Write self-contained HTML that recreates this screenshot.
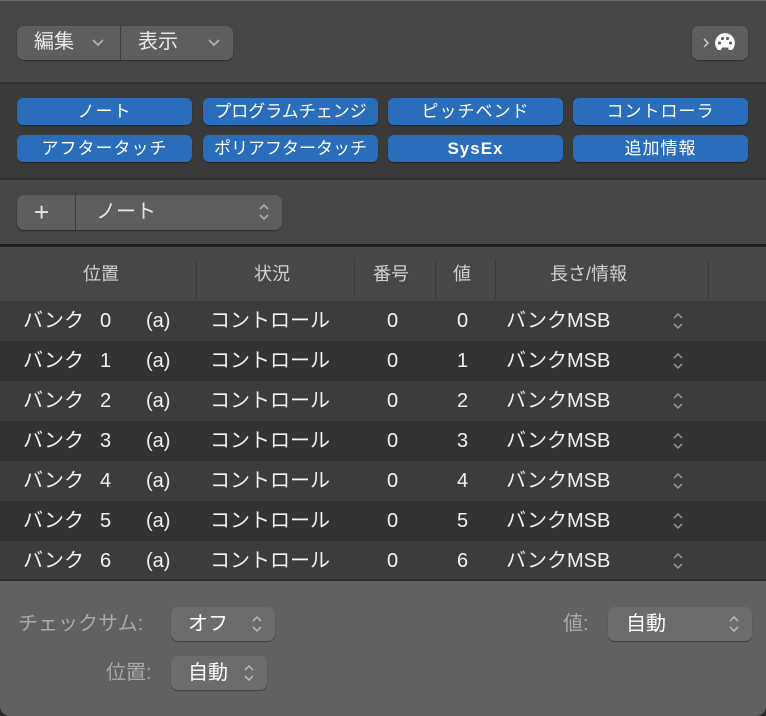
<!DOCTYPE html>
<html><head><meta charset="utf-8"><style>
*{margin:0;padding:0;box-sizing:border-box}
body{width:766px;height:716px;background:#2a2a2a;font-family:"Liberation Sans","Noto Sans CJK JP",sans-serif;color:#e8e8e8;overflow:hidden;position:relative}
.win{position:absolute;left:0;top:0;width:766px;height:716px;background:#464646;border-radius:0 0 10px 10px;overflow:hidden;border-top:1px solid #666}
.a{position:absolute;line-height:34px}
.btn{position:absolute;background:#5e5e5e;border-radius:7px;box-shadow:0 1px 1px rgba(0,0,0,.35)}
.blue{position:absolute;height:27px;width:175px;background:#2a6dbb;border-radius:6px;color:#fff;font-size:17px;text-align:center;line-height:27px;box-shadow:0 1px 1px rgba(0,0,0,.4);letter-spacing:1px}
.hd{position:absolute;top:246px;line-height:54px;font-size:18px;color:#d0d0d0}
.row{position:absolute;left:0;width:766px;height:40px;font-size:20px;color:#f2f2f2}
.row span{position:absolute;top:0;line-height:40px}
.row svg{position:absolute;left:671px;top:9px}
.sep{position:absolute;top:258px;width:1px;height:40px;background:#3a3a3a}
.lbl{position:absolute;font-size:19px;color:#a8a8a8;line-height:34px}
</style></head><body><div class="win">
<div class="btn" style="left:17px;top:25px;width:216px;height:34px"></div>
<div class="a" style="left:120px;top:25px;width:1px;height:34px;background:#3e3e3e"></div>
<div class="a" style="left:34px;top:24px;font-size:20px">編集</div>
<svg class="a" style="left:91px;top:37px" width="14" height="10"><path d="M2 2l5 5 5-5" stroke="#aaa" stroke-width="2" fill="none"/></svg>
<div class="a" style="left:138px;top:24px;font-size:20px">表示</div>
<svg class="a" style="left:207px;top:37px" width="14" height="10"><path d="M2 2l5 5 5-5" stroke="#aaa" stroke-width="2" fill="none"/></svg>
<div class="btn" style="left:692px;top:25px;width:56px;height:34px"></div>
<svg class="a" style="left:702px;top:31px" width="40" height="22"><path d="M2 7l4 4-4 4" stroke="#ccc" stroke-width="1.5" fill="none"/><path d="M16 18 A9.9 9.9 0 1 1 30 18 L27 18 L26 15.5 L20 15.5 L19 18Z" fill="#fff"/><circle cx="17.5" cy="11" r="1.5" fill="#555"/><circle cx="20.5" cy="6.5" r="1.5" fill="#555"/><circle cx="25.5" cy="6.5" r="1.5" fill="#555"/><circle cx="28.5" cy="11" r="1.5" fill="#555"/></svg>
<div class="a" style="left:0;top:81px;width:766px;height:2px;background:#333"></div>
<div class="a" style="left:0;top:83px;width:766px;height:95px;background:#3a3a3a"></div>
<div class="a" style="left:0;top:177px;width:766px;height:2px;background:#303030"></div>
<div class="blue" style="left:17px;top:97px">ノート</div>
<div class="blue" style="left:203px;top:97px;letter-spacing:0">プログラムチェンジ</div>
<div class="blue" style="left:388px;top:97px">ピッチベンド</div>
<div class="blue" style="left:573px;top:97px">コントローラ</div>
<div class="blue" style="left:17px;top:134px">アフタータッチ</div>
<div class="blue" style="left:203px;top:134px;letter-spacing:0">ポリアフタータッチ</div>
<div class="blue" style="left:388px;top:134px;font-weight:bold">SysEx</div>
<div class="blue" style="left:573px;top:134px">追加情報</div>
<div class="btn" style="left:17px;top:194px;width:265px;height:35px"></div>
<div class="a" style="left:75px;top:194px;width:1px;height:35px;background:#3e3e3e"></div>
<div class="a" style="left:34px;top:194px;font-size:26px">+</div>
<div class="a" style="left:96px;top:194px;font-size:20px">ノート</div>
<svg class="a" style="left:257px;top:200px" width="14" height="22"><path d="M3 8l4-4 4 4M3 14l4 4 4-4" stroke="#aaa" stroke-width="1.6" fill="none"/></svg>
<div class="a" style="left:0;top:243px;width:766px;height:3px;background:#1e1e1e"></div>
<div class="a" style="left:0;top:246px;width:766px;height:54px;background:#474747"></div>
<div class="sep" style="left:196px"></div><div class="sep" style="left:354px"></div><div class="sep" style="left:435px"></div><div class="sep" style="left:495px"></div><div class="sep" style="left:708px"></div>
<div class="hd" style="left:83px">位置</div>
<div class="hd" style="left:254px">状況</div>
<div class="hd" style="left:373px">番号</div>
<div class="hd" style="left:453px">値</div>
<div class="hd" style="left:550px">長さ/情報</div>
<div class="row" style="top:300px;background:#3c3c3c"><span style="left:23px">バンク</span><span style="left:100px">0</span><span style="left:146px">(a)</span><span style="left:210px">コントロール</span><span style="left:387px">0</span><span style="left:457px">0</span><span style="left:506px">バンクMSB</span><svg width="14" height="22"><path d="M3 8l4-4 4 4M3 14l4 4 4-4" stroke="#999" stroke-width="1.5" fill="none"/></svg></div>
<div class="row" style="top:340px;background:#333"><span style="left:23px">バンク</span><span style="left:100px">1</span><span style="left:146px">(a)</span><span style="left:210px">コントロール</span><span style="left:387px">0</span><span style="left:457px">1</span><span style="left:506px">バンクMSB</span><svg width="14" height="22"><path d="M3 8l4-4 4 4M3 14l4 4 4-4" stroke="#999" stroke-width="1.5" fill="none"/></svg></div>
<div class="row" style="top:380px;background:#3c3c3c"><span style="left:23px">バンク</span><span style="left:100px">2</span><span style="left:146px">(a)</span><span style="left:210px">コントロール</span><span style="left:387px">0</span><span style="left:457px">2</span><span style="left:506px">バンクMSB</span><svg width="14" height="22"><path d="M3 8l4-4 4 4M3 14l4 4 4-4" stroke="#999" stroke-width="1.5" fill="none"/></svg></div>
<div class="row" style="top:420px;background:#333"><span style="left:23px">バンク</span><span style="left:100px">3</span><span style="left:146px">(a)</span><span style="left:210px">コントロール</span><span style="left:387px">0</span><span style="left:457px">3</span><span style="left:506px">バンクMSB</span><svg width="14" height="22"><path d="M3 8l4-4 4 4M3 14l4 4 4-4" stroke="#999" stroke-width="1.5" fill="none"/></svg></div>
<div class="row" style="top:460px;background:#3c3c3c"><span style="left:23px">バンク</span><span style="left:100px">4</span><span style="left:146px">(a)</span><span style="left:210px">コントロール</span><span style="left:387px">0</span><span style="left:457px">4</span><span style="left:506px">バンクMSB</span><svg width="14" height="22"><path d="M3 8l4-4 4 4M3 14l4 4 4-4" stroke="#999" stroke-width="1.5" fill="none"/></svg></div>
<div class="row" style="top:500px;background:#333"><span style="left:23px">バンク</span><span style="left:100px">5</span><span style="left:146px">(a)</span><span style="left:210px">コントロール</span><span style="left:387px">0</span><span style="left:457px">5</span><span style="left:506px">バンクMSB</span><svg width="14" height="22"><path d="M3 8l4-4 4 4M3 14l4 4 4-4" stroke="#999" stroke-width="1.5" fill="none"/></svg></div>
<div class="row" style="top:540px;background:#3c3c3c"><span style="left:23px">バンク</span><span style="left:100px">6</span><span style="left:146px">(a)</span><span style="left:210px">コントロール</span><span style="left:387px">0</span><span style="left:457px">6</span><span style="left:506px">バンクMSB</span><svg width="14" height="22"><path d="M3 8l4-4 4 4M3 14l4 4 4-4" stroke="#999" stroke-width="1.5" fill="none"/></svg></div>
<div class="a" style="left:0;top:578px;width:766px;height:2px;background:#2e2e2e"></div>
<div class="a" style="left:0;top:580px;width:766px;height:136px;background:#616161"></div>
<div class="lbl" style="left:18px;top:606px;font-size:20px">チェックサム:</div>
<div class="btn" style="left:171px;top:606px;width:104px;height:34px;background:#6c6c6c"></div>
<div class="a" style="left:188px;top:606px;font-size:20px;color:#fff">オフ</div>
<svg class="a" style="left:250px;top:612px" width="14" height="22"><path d="M3 8l4-4 4 4M3 14l4 4 4-4" stroke="#bbb" stroke-width="1.5" fill="none"/></svg>
<div class="lbl" style="left:106px;top:655px;font-size:20px">位置:</div>
<div class="btn" style="left:171px;top:655px;width:96px;height:34px;background:#6c6c6c"></div>
<div class="a" style="left:188px;top:655px;font-size:20px;color:#fff">自動</div>
<svg class="a" style="left:242px;top:661px" width="14" height="22"><path d="M3 8l4-4 4 4M3 14l4 4 4-4" stroke="#bbb" stroke-width="1.5" fill="none"/></svg>
<div class="lbl" style="left:563px;top:606px;font-size:20px">値:</div>
<div class="btn" style="left:608px;top:606px;width:144px;height:34px;background:#6c6c6c"></div>
<div class="a" style="left:626px;top:606px;font-size:20px;color:#fff">自動</div>
<svg class="a" style="left:727px;top:612px" width="14" height="22"><path d="M3 8l4-4 4 4M3 14l4 4 4-4" stroke="#bbb" stroke-width="1.5" fill="none"/></svg>
</div></body></html>
